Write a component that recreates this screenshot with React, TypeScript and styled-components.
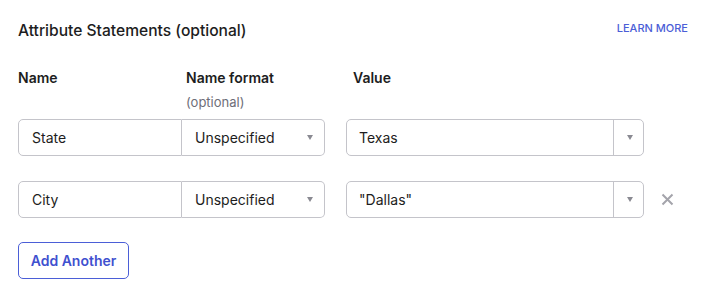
import { createGlobalStyle, styled } from 'styled-components'

const GlobalStyle = createGlobalStyle`
  body {
    margin: 0;
    background: #ffffff;
    font-family: Inter, "Noto Sans", sans-serif;
    color: #1d1d21;
  }
`

const Container = styled.div`
  width: 710px;
  height: 299px;
  box-sizing: border-box;
  padding: 20px 22px 0 18px;
`

const Header = styled.div`
  display: flex;
  justify-content: space-between;
  align-items: flex-start;
  height: 48px;
`

const Title = styled.h2`
  margin: 1px 0 0;
  font-size: 15.6px;
  font-weight: 500;
  line-height: 20px;
`

const LearnMore = styled.a`
  font-size: 11px;
  font-weight: 500;
  color: #4b5ed7;
  text-decoration: none;
  line-height: 16px;
`

const Grid = styled.div`
  display: grid;
  grid-template-columns: 164px 143px 21px 298px 30px;
  align-items: center;
`

const Label = styled.div<{ $indent?: number }>`
  font-size: 14px;
  font-weight: 600;
  line-height: 20px;
  padding-left: ${p => p.$indent ?? 0}px;
`

const Hint = styled.div`
  font-size: 13px;
  color: #6e6e78;
  line-height: 18px;
  padding-left: 4px;
  margin: 5px 0 8px;
`

const Field = styled.div<{ $side?: 'left' | 'right' | 'both' }>`
  height: 37px;
  box-sizing: border-box;
  border: 1px solid #c4c4ca;
  border-radius: ${p =>
    p.$side === 'left' ? '5px 0 0 5px' : p.$side === 'right' ? '0 5px 5px 0' : '5px'};
  ${p => (p.$side === 'right' ? 'border-left: none;' : '')}
  display: flex;
  align-items: center;
  font-size: 14px;
  color: #1d1d21;
  background: #fff;
`

const FieldText = styled.span<{ $pad: number }>`
  flex: 1;
  padding-left: ${p => p.$pad}px;
`

const Arrow = styled.span`
  width: 0;
  height: 0;
  border-left: 3.5px solid transparent;
  border-right: 3.5px solid transparent;
  border-top: 5px solid #8a8a92;
  margin-right: 11px;
`

const ArrowBox = styled.span`
  width: 30px;
  box-sizing: border-box;
  padding-left: 3px;
  align-self: stretch;
  border-left: 1px solid #c4c4ca;
  display: flex;
  align-items: center;
  justify-content: center;

  & > span {
    margin-right: 0;
  }
`

const RowGap = styled.div`
  grid-column: 1 / -1;
  height: 25px;
`

const Remove = styled.button`
  justify-self: end;
  border: none;
  background: none;
  padding: 0;
  width: 13px;
  height: 13px;
  display: flex;
  cursor: pointer;
`

const AddButton = styled.button`
  margin-top: 24px;
  width: 111px;
  height: 37px;
  border: 1px solid #4b5ed7;
  border-radius: 5px;
  background: #fff;
  color: #3f51cf;
  font-family: Inter, "Noto Sans", sans-serif;
  font-size: 14px;
  font-weight: 600;
  cursor: pointer;
`

const rows = [
  { name: 'State', value: 'Texas', removable: false },
  { name: 'City', value: '"Dallas"', removable: true },
]

const App = () => {
  return (
    <>
      <GlobalStyle />
      <Container>
        <Header>
          <Title>Attribute Statements (optional)</Title>
          <LearnMore href="#">LEARN MORE</LearnMore>
        </Header>
        <Grid>
          <Label>Name</Label>
          <Label $indent={4}>Name format</Label>
          <div />
          <Label $indent={7}>Value</Label>
          <div />
          <div />
          <Hint>(optional)</Hint>
          <div />
          <div />
          <div />
          {rows.map((r, i) => (
            <>
              {i > 0 && <RowGap />}
              <Field $side="left">
                <FieldText $pad={13}>{r.name}</FieldText>
              </Field>
              <Field $side="right">
                <FieldText $pad={13}>Unspecified</FieldText>
                <Arrow />
              </Field>
              <div />
              <Field>
                <FieldText $pad={12}>{r.value}</FieldText>
                <ArrowBox>
                  <Arrow />
                </ArrowBox>
              </Field>
              {r.removable ? (
                <Remove aria-label="Remove">
                  <svg width="13" height="13" viewBox="0 0 13 13">
                    <path d="M1.5 1.5 L11.5 11.5 M11.5 1.5 L1.5 11.5" stroke="#a4a4ab" strokeWidth="2" />
                  </svg>
                </Remove>
              ) : (
                <div />
              )}
            </>
          ))}
        </Grid>
        <AddButton>Add Another</AddButton>
      </Container>
    </>
  )
}

export default App
